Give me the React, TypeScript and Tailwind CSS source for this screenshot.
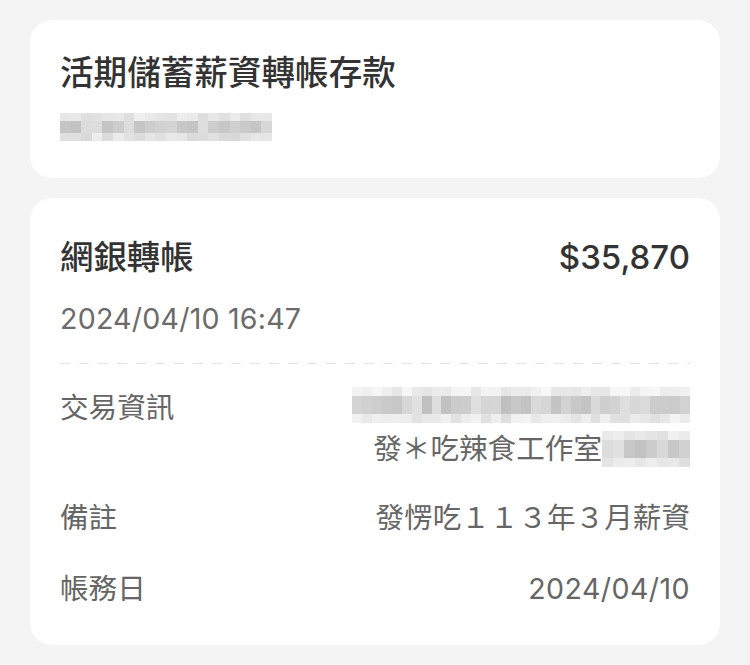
import React from "react";

function rand(seed: number) {
  let s = seed;
  return () => {
    s = (s * 9301 + 49297) % 233280;
    return s / 233280;
  };
}

function Mosaic({
  cols,
  rows,
  seed,
  className,
}: {
  cols: number;
  rows: { h: number; min: number; max: number }[];
  seed: number;
  className: string;
}) {
  const r = rand(seed);
  return (
    <div className={`flex flex-col ${className}`}>
      {rows.map((row, i) => (
        <div key={i} className="flex w-full" style={{ height: row.h }}>
          {Array.from({ length: cols }).map((_, j) => {
            const v = Math.round(row.min + r() * (row.max - row.min));
            return (
              <div
                key={j}
                className="flex-1"
                style={{ backgroundColor: `rgb(${v},${v},${v})` }}
              />
            );
          })}
        </div>
      ))}
    </div>
  );
}

export default function App() {
  const font = { fontFamily: 'Inter, "Noto Sans CJK TC", sans-serif' };
  return (
    <div
      className="w-[750px] h-[665px] bg-[#f4f4f4] pt-5 px-[30px] text-[#333]"
      style={font}
    >
      <div className="bg-white rounded-[22px] h-[158px] pl-[30px] pt-[33px]">
        <div className="text-[33.6px] leading-[40px] font-medium text-[#333]">
          活期儲蓄薪資轉帳存款
        </div>
        <Mosaic
          className="mt-[20px] w-[212px]"
          cols={20}
          seed={7}
          rows={[
            { h: 8, min: 220, max: 242 },
            { h: 12, min: 192, max: 222 },
            { h: 8, min: 215, max: 238 },
          ]}
        />
      </div>

      <div className="bg-white rounded-[22px] h-[447px] mt-5 px-[30px] pt-[39px]">
        <div className="flex items-center justify-between">
          <div className="text-[33.4px] leading-[40px] font-medium text-[#333]">
            網銀轉帳
          </div>
          <div className="text-[33px] leading-[40px] font-medium text-[#333]">
            $35,870
          </div>
        </div>
        <div className="mt-[24px] text-[28.6px] leading-[36px] text-[#6b6b6b] tracking-[0.2px]">
          2024/04/10 16:47
        </div>
        <div className="mt-[26px] h-px bg-[linear-gradient(to_right,#e3e3e3_55%,transparent_55%)] bg-[length:19px_1px]" />

        <div className="mt-[19px] flex justify-between text-[28.6px] text-[#666]">
          <div className="leading-[44px] pt-[3px]">交易資訊</div>
          <div className="flex flex-col items-end">
            <div className="h-[44px] flex items-center">
              <Mosaic
                className="w-[338px]"
                cols={34}
                seed={13}
                rows={[
                  { h: 9, min: 228, max: 248 },
                  { h: 18, min: 192, max: 226 },
                  { h: 9, min: 222, max: 244 },
                ]}
              />
            </div>
            <div className="h-[44px] flex items-center leading-[44px]">
              <span>發＊吃辣食工作室</span>
              <Mosaic
                className="w-[88px]"
                cols={8}
                seed={31}
                rows={[
                  { h: 9, min: 225, max: 244 },
                  { h: 18, min: 188, max: 226 },
                  { h: 9, min: 222, max: 242 },
                ]}
              />
            </div>
          </div>
        </div>

        <div className="mt-[25px] flex justify-between text-[28.6px] leading-[44px] text-[#666]">
          <div>備註</div>
          <div>發愣吃１１３年３月薪資</div>
        </div>

        <div className="mt-[27px] flex justify-between text-[28.6px] leading-[44px] text-[#666]">
          <div>帳務日</div>
          <div className="tracking-[0.4px]">2024/04/10</div>
        </div>
      </div>
    </div>
  );
}
